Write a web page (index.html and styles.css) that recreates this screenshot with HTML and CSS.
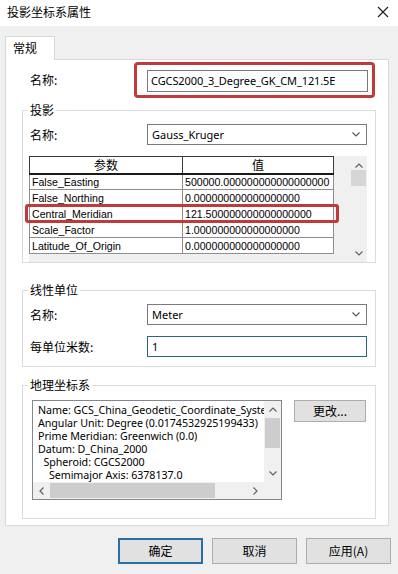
FILE: index.html
```html
<!DOCTYPE html>
<html lang="zh">
<head>
<meta charset="utf-8">
<title>投影坐标系属性</title>
<link rel="stylesheet" href="styles.css">
</head>
<body>
<div class="titlebar">
  <span class="title">投影坐标系属性</span>
  <svg class="close" width="12" height="12" viewBox="0 0 12 12"><path d="M1 1L11 11M11 1L1 11" stroke="#1a1a1a" stroke-width="1.1" fill="none"/></svg>
</div>
<div class="content">
  <div class="tabs"><div class="tab">常规</div></div>
  <div class="panel">
    <div class="name-row">
      <span class="label name-label">名称:</span>
      <div class="highlight-box"><div class="textbox latin">CGCS2000_3_Degree_GK_CM_121.5E</div></div>
    </div>

    <fieldset class="group group-proj">
      <legend>投影</legend>
      <div class="row first">
        <span class="label">名称:</span>
        <div class="select latin">Gauss_Kruger<svg class="chev" width="8" height="5" viewBox="0 0 8 5"><path d="M0.5 0.5L4 4L7.5 0.5" stroke="#555" stroke-width="1.1" fill="none"/></svg></div>
      </div>
      <div class="grid-wrap">
        <div class="grid">
          <table class="params">
            <thead><tr><th class="c1">参数</th><th class="c2">值</th></tr></thead>
            <tbody>
              <tr><td>False_Easting</td><td>500000.000000000000000000</td></tr>
              <tr><td>False_Northing</td><td>0.000000000000000000</td></tr>
              <tr><td>Central_Meridian</td><td>121.500000000000000000</td></tr>
              <tr><td>Scale_Factor</td><td>1.000000000000000000</td></tr>
              <tr><td>Latitude_Of_Origin</td><td>0.000000000000000000</td></tr>
            </tbody>
          </table>
          <div class="row-highlight"></div>
        </div>
        <div class="vscroll grid-scroll">
          <div class="sbtn up"><svg width="8" height="5" viewBox="0 0 8 5"><path d="M0.5 4.5L4 1L7.5 4.5" stroke="#606060" stroke-width="1.2" fill="none"/></svg></div>
          <div class="thumb"></div>
          <div class="fill"></div>
          <div class="sbtn down"><svg width="8" height="5" viewBox="0 0 8 5"><path d="M0.5 0.5L4 4L7.5 0.5" stroke="#606060" stroke-width="1.2" fill="none"/></svg></div>
        </div>
      </div>
    </fieldset>

    <fieldset class="group group-unit">
      <legend>线性单位</legend>
      <div class="row first">
        <span class="label">名称:</span>
        <div class="select latin">Meter<svg class="chev" width="8" height="5" viewBox="0 0 8 5"><path d="M0.5 0.5L4 4L7.5 0.5" stroke="#555" stroke-width="1.1" fill="none"/></svg></div>
      </div>
      <div class="row second">
        <span class="label">每单位米数:</span>
        <div class="input focused latin">1</div>
      </div>
    </fieldset>

    <fieldset class="group group-geo">
      <legend>地理坐标系</legend>
      <div class="geo-row">
        <div class="textarea">
          <div class="ta-text latin">Name: GCS_China_Geodetic_Coordinate_System_2000
Angular Unit: Degree (0.0174532925199433)
Prime Meridian: Greenwich (0.0)
Datum: D_China_2000
  Spheroid: CGCS2000
    Semimajor Axis: 6378137.0</div>
          <div class="vscroll ta-v">
            <div class="sbtn"><svg width="8" height="5" viewBox="0 0 8 5"><path d="M0.5 4.5L4 1L7.5 4.5" stroke="#606060" stroke-width="1.2" fill="none"/></svg></div>
            <div class="thumb"></div>
            <div class="fill"></div>
            <div class="sbtn"><svg width="8" height="5" viewBox="0 0 8 5"><path d="M0.5 0.5L4 4L7.5 0.5" stroke="#606060" stroke-width="1.2" fill="none"/></svg></div>
          </div>
          <div class="hscroll">
            <div class="sbtn"><svg width="5" height="8" viewBox="0 0 5 8"><path d="M4.5 0.5L1 4L4.5 7.5" stroke="#606060" stroke-width="1.2" fill="none"/></svg></div>
            <div class="hthumb"></div>
            <div class="fill"></div>
            <div class="sbtn"><svg width="5" height="8" viewBox="0 0 5 8"><path d="M0.5 0.5L4 4L0.5 7.5" stroke="#606060" stroke-width="1.2" fill="none"/></svg></div>
          </div>
          <div class="corner"></div>
        </div>
        <button class="btn change">更改...</button>
      </div>
    </fieldset>
  </div>
</div>
<div class="actions">
  <button class="btn default">确定</button>
  <button class="btn">取消</button>
  <button class="btn">应用(A)</button>
</div>
</body>
</html>
```

FILE: styles.css
```css
* { box-sizing: border-box; }
html, body { margin: 0; padding: 0; }
body {
  width: 398px;
  height: 574px;
  overflow: hidden;
  background: #f0f0f0;
  font-family: "Noto Sans CJK SC", "Noto Sans", sans-serif;
  font-size: 12px;
  color: #000;
}
.latin { font-family: "Noto Sans", "Noto Sans CJK SC", sans-serif; font-size: 11px; }

.titlebar {
  height: 26px;
  background: #fff;
  display: flex;
  align-items: center;
  justify-content: space-between;
  padding: 0 9px 0 7px;
}
.title { line-height: 16px; margin-top: -2px; }
.close { margin-top: -3px; }

.content { padding: 10px 9px 0 5px; }
.tabs { display: flex; height: 24px; position: relative; z-index: 1; margin-bottom: -1px; }
.tab {
  width: 50px;
  height: 24px;
  background: #fff;
  border: 1px solid #d9d9d9;
  border-bottom: none;
  padding: 3px 0 0 7px;
  line-height: 16px;
}
.panel {
  height: 467px;
  background: #fff;
  border: 1px solid #d9d9d9;
}

.name-row {
  display: flex;
  align-items: center;
  margin-top: 2px;
  padding-left: 24px;
}
.label { line-height: 16px; white-space: nowrap; }
.name-label { width: 104px; }
.highlight-box {
  width: 241px;
  height: 36px;
  border: 3px solid #c13a3a;
  border-radius: 4px;
  padding: 5px 4px 0 10px;
}
.textbox {
  width: 221px;
  height: 22px;
  border: 1px solid #7a7a7a;
  background: #fff;
  padding: 0 3px;
  line-height: 20px;
  white-space: nowrap;
  overflow: hidden;
  letter-spacing: -0.1px;
}

.group {
  margin: 4px 12px 0 16px;
  padding: 0;
  border: 1px solid #dcdcdc;
  min-width: 0;
}
.group legend {
  margin-left: 5px;
  padding: 0 2px;
  line-height: 16px;
  font-size: 12px;
}
.row { display: flex; align-items: center; padding-left: 7px; }
.row .label { width: 117px; }
.row.first { margin-top: 6px; }
.row.second { margin-top: 11px; }
.select, .input {
  width: 220px;
  height: 21px;
  border: 1px solid #7a7a7a;
  background: #fff;
  display: flex;
  align-items: center;
  justify-content: space-between;
  padding: 0 4px 0 4px;
  line-height: 19px;
}
.input.focused { border-color: #2f6678; }
.chev { margin-right: 2px; }

.grid-wrap {
  margin: 11px 8px 0 6px;
  height: 106px;
  background: #f0f0f0;
  display: flex;
  justify-content: space-between;
}
.grid { position: relative; }
.params {
  border-collapse: collapse;
  width: 305px;
  background: #fff;
  font-family: "Liberation Sans", Arial, sans-serif;
  font-size: 10.6px;
  table-layout: fixed;
}
.params th {
  height: 17px;
  padding: 0;
  font-weight: normal;
  font-family: "Noto Sans CJK SC", sans-serif;
  font-size: 12px;
  line-height: 15px;
  border: 1px solid #3a3a3a;
  border-bottom: 2px solid #1a1a1a;
}
.params .c1 { width: 153px; }
.params td {
  height: 16px;
  padding: 0 0 0 2px;
  border: 1px solid #8e8e8e;
  line-height: 14px;
  white-space: nowrap;
  overflow: hidden;
}
.row-highlight {
  position: absolute;
  left: -4px;
  top: 48px;
  width: 314px;
  height: 19px;
  border: 3px solid #c13a3a;
  border-radius: 3px;
}

.vscroll { width: 17px; display: flex; flex-direction: column; }
.grid-scroll { margin-top: 4px; height: 102px; }
.grid-scroll .sbtn.up { height: 10px; }
.sbtn {
  height: 17px;
  flex: none;
  display: flex;
  align-items: center;
  justify-content: center;
}
.thumb { height: 16px; background: #d6d6d6; flex: none; margin: 0 1px; }
.fill { flex: 1; }

.group-unit { margin-top: 19px; padding-bottom: 9px; }
.group-geo { margin-top: 10px; padding-bottom: 18px; }

.geo-row { display: flex; align-items: flex-start; margin: 7px 0 0 9px; gap: 12px; }
.textarea {
  width: 250px;
  height: 100px;
  border: 1px solid #828790;
  background: #fff;
  display: grid;
  grid-template-columns: 1fr 17px;
  grid-template-rows: 1fr 17px;
}
.ta-text {
  white-space: pre;
  overflow: hidden;
  padding: 3px 0 0 5px;
  line-height: 13px;
  font-size: 10.7px;
  letter-spacing: -0.05px;
}
.ta-v { background: #f0f0f0; }
.ta-v .thumb { height: 30px; background: #cdcdcd; }
.hscroll { display: flex; background: #f0f0f0; }
.hscroll .sbtn { width: 17px; }
.hthumb { width: 165px; background: #cdcdcd; margin: 1px 0; }
.corner { background: #f0f0f0; }

.btn {
  font-family: "Noto Sans CJK SC", sans-serif;
  font-size: 12px;
  color: #000;
  background: #e1e1e1;
  border: 1px solid #adadad;
  padding: 0;
  line-height: 16px;
}
.change { width: 72px; height: 22px; }

.actions {
  display: flex;
  justify-content: flex-end;
  gap: 9px;
  padding: 12px 7px 0 0;
}
.actions .btn { width: 85px; height: 26px; }
.actions .btn.default { border: 2px solid #2a6fa3; }
```
